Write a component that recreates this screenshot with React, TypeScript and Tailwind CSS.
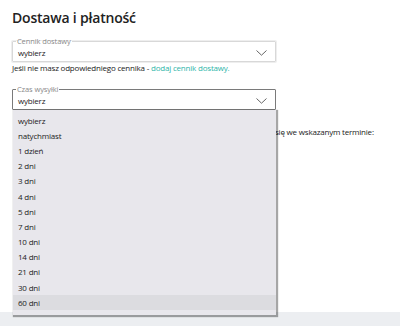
import React from "react";

const options = [
  "wybierz",
  "natychmiast",
  "1 dzień",
  "2 dni",
  "3 dni",
  "4 dni",
  "5 dni",
  "7 dni",
  "10 dni",
  "14 dni",
  "21 dni",
  "30 dni",
  "60 dni",
];

const Chevron: React.FC = () => (
  <svg width="11" height="6" viewBox="0 0 11 6" fill="none" className="shrink-0">
    <path d="M0.5 0.5 L5.5 5.2 L10.5 0.5" stroke="#666" strokeWidth="1" />
  </svg>
);

interface SelectBoxProps {
  label: string;
  focused?: boolean;
}

const SelectBox: React.FC<SelectBoxProps> = ({ label, focused }) => (
  <fieldset
    className={
      focused
        ? "border border-[#7a7a7a] rounded-[1px] h-[25px] px-[5px] flex"
        : "border border-[#d8d8d8] rounded-[1px] h-[25px] px-[5px] flex shadow-[0_0_0_1px_#eeeeee]"
    }
  >
    <legend className="px-[1px] ml-[-2px] text-[7.5px] leading-[9px] tracking-[-0.1px] text-[#8a8a8a]">
      {label}
    </legend>
    <div className="flex items-center justify-between w-full pr-[3px] mt-[-1px]">
      <span className="text-[8px] tracking-[-0.2px] text-[#222]">wybierz</span>
      <Chevron />
    </div>
  </fieldset>
);

const App: React.FC = () => {
  return (
    <div className="w-[400px] h-[326px] bg-white overflow-hidden font-['Open_Sans',sans-serif] text-[#222]">
      <div className="h-[312px] pl-[12px] pt-[8px]">
        <h2 className="text-[14px] leading-[20px] font-semibold tracking-[-0.2px] text-[#222]">
          Dostawa i płatność
        </h2>
        <div className="w-[264px] mt-[9px]">
          <SelectBox label="Cennik dostawy" />
        </div>
        <p className="text-[8px] leading-[12px] tracking-[-0.2px] mt-[0px] text-[#222]">
          Jeśli nie masz odpowiedniego cennika -{" "}
          <span className="text-[#2fb5a9]">dodaj cennik dostawy.</span>
        </p>
        <div className="relative w-[264px] mt-[11px]">
          <SelectBox label="Czas wysyłki" focused />
          <div className="absolute left-[1px] top-[25px] w-[263px] h-[205px] bg-[#e8e7ec] pt-[3px] shadow-[1px_1px_1px_1px_rgba(0,0,0,0.35)] z-10">
            {options.map((o) => (
              <div
                key={o}
                className={
                  o === "60 dni"
                    ? "h-[15.2px] flex items-center px-[5px] text-[8px] tracking-[-0.2px] text-[#222] bg-[#dcdce0]"
                    : "h-[15.2px] flex items-center px-[5px] text-[8px] tracking-[-0.2px] text-[#222]"
                }
              >
                {o}
              </div>
            ))}
          </div>
        </div>
        <div className="flex text-[8px] leading-[12px] tracking-[-0.2px] mt-[16px] whitespace-nowrap">
          <div className="w-[263px] shrink-0" />
          <span>się we wskazanym terminie:</span>
        </div>
      </div>
      <div className="h-[14px] bg-[#eceef1]" />
    </div>
  );
};

export default App;
